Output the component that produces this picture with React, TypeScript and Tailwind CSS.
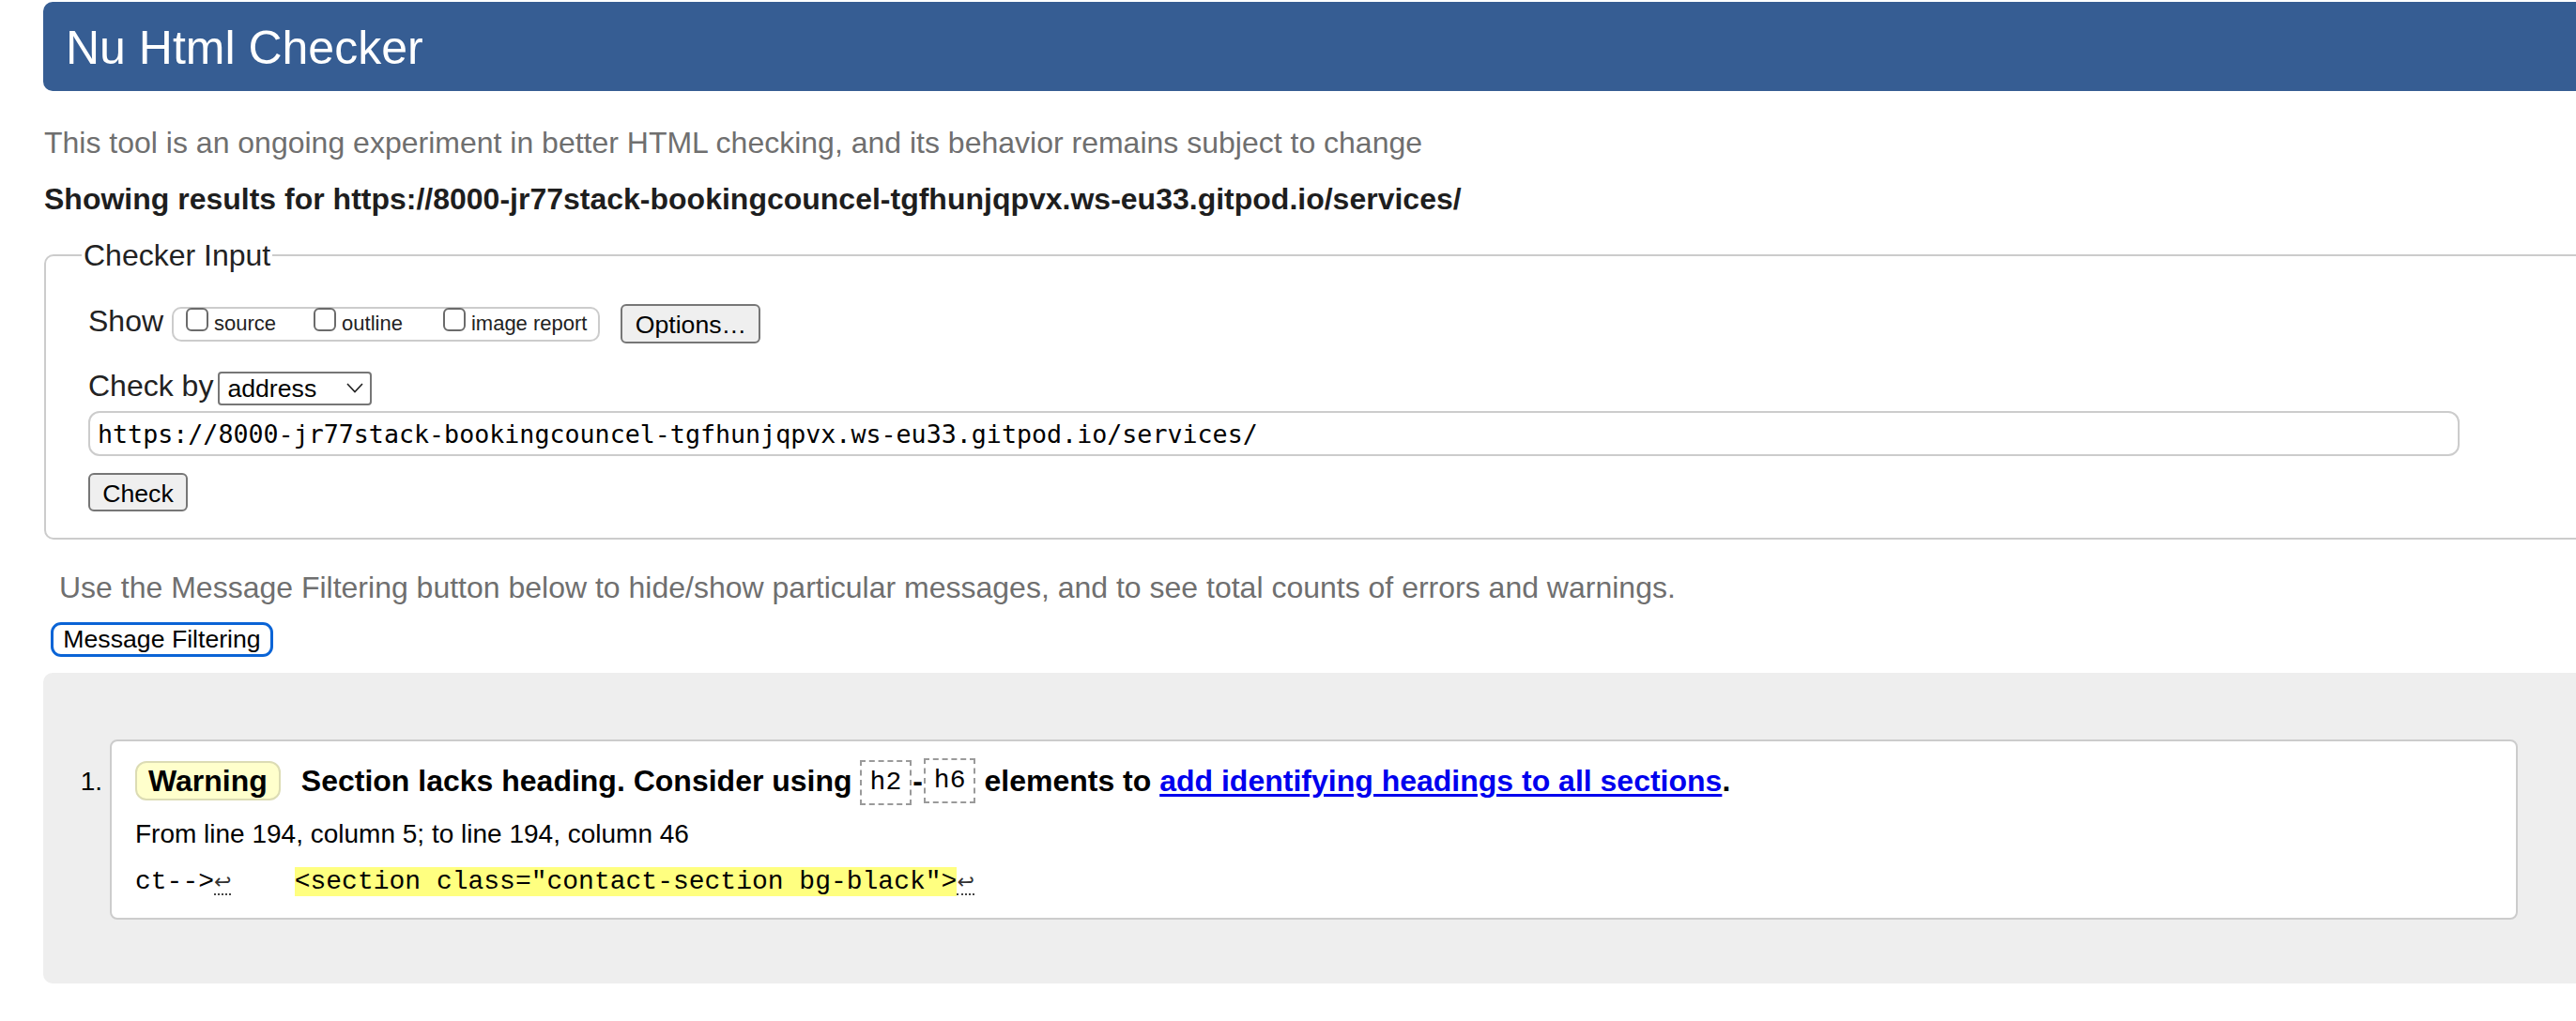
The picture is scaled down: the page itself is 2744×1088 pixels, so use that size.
import React from "react";

const SANS = "font-['Liberation_Sans',Arial,sans-serif]";
const CODE = "font-['Liberation_Mono','Courier_New',monospace]";

function ShowOptions() {
  const items = [
    { label: "source", gap: "mr-[40px]" },
    { label: "outline", gap: "mr-[43px]" },
    { label: "image report", gap: "" },
  ];

  return (
    <div className="flex h-[37px] items-start rounded-[10px] border-2 border-[#cccccc] pl-[13px] pr-[12px]">
      {items.map((item) => (
        <label key={item.label} className={`flex items-start ${item.gap}`}>
          <input
            type="checkbox"
            className="mt-[-1px] h-[25px] w-[24px] appearance-none rounded-[6px] border-2 border-[#6b6b6b] bg-white"
          />
          <span className="ml-[6px] mt-[4px] text-[22px] leading-[24px] text-[#222]">{item.label}</span>
        </label>
      ))}
    </div>
  );
}

function CheckerInput() {
  return (
    <fieldset className="mt-[20px] rounded-[10px] border-2 border-[#cccccc] pb-[28px]">
      <legend className="ml-[38px] px-[2px] text-[32px] leading-[40px] text-[#222]">Checker Input</legend>

      <div className="pl-[45px]">
        <div className="mt-[32px] flex h-[42px] items-center">
          <span className="pb-[6px] text-[32px] leading-[36px] text-[#222]">Show</span>
          <div className="ml-[9px]">
            <ShowOptions />
          </div>
          <button
            type="button"
            className="ml-[22px] h-[42px] w-[149px] rounded-[6px] border-2 border-[#767676] bg-[#efefef] text-[26.67px] text-black"
          >
            Options…
          </button>
        </div>

        <div className="mt-[30px] flex h-[36px] items-center">
          <span className="pb-[6px] text-[32px] leading-[36px] text-[#222]">Check by</span>
          <div className="relative ml-[5px]">
            <select
              defaultValue="address"
              className="h-[36px] w-[164px] appearance-none rounded-[4px] border-2 border-[#767676] bg-white pl-[8px] text-[26.67px] leading-[32px] text-black"
            >
              <option value="address">address</option>
              <option value="file">file upload</option>
              <option value="text">text input</option>
            </select>
            <svg
              className="pointer-events-none absolute right-[9px] top-[12px]"
              width="18"
              height="11"
              viewBox="0 0 18 11"
              fill="none"
            >
              <polyline points="1,1 9,9.5 17,1" stroke="#222" strokeWidth="1.6" />
            </svg>
          </div>
        </div>

        <input
          type="text"
          readOnly
          value="https://8000-jr77stack-bookingcouncel-tgfhunjqpvx.ws-eu33.gitpod.io/services/"
          className="mt-[6px] block h-[48px] w-[2526px] rounded-[12px] border-2 border-[#cccccc] bg-white pl-[8px] font-['DejaVu_Sans_Mono',monospace] text-[26.67px] text-black outline-none"
        />

        <button
          type="button"
          className="mt-[18px] h-[41px] w-[106px] rounded-[6px] border-2 border-[#767676] bg-[#efefef] text-[26.67px] text-black"
        >
          Check
        </button>
      </div>
    </fieldset>
  );
}

function Newline() {
  return (
    <span className="border-b-2 border-dotted border-[#444] font-['DejaVu_Sans',sans-serif] text-[22px] text-[#333]">
      ↩
    </span>
  );
}

function ElementName({ name }: { name: string }) {
  return (
    <span className={`inline-flex h-[48px] items-center border-2 border-dashed border-[#9a9a9a] px-[9px] text-[28px] font-normal ${CODE}`}>
      {name}
    </span>
  );
}

function WarningCard() {
  return (
    <div className="flex">
      <span className="mt-[27px] w-[71px] pr-[8px] text-right text-[28px] leading-[36px] text-black">1.</span>
      <div className="w-[2565px] rounded-[8px] border-2 border-[#cccccc] bg-white pb-[20px] pl-[25px] pt-[18px]">
        <div className="flex h-[48px] items-center text-[32px] font-bold text-black">
          <span className="flex h-[42px] items-center rounded-[12px] border-2 border-[#dcdcb4] bg-[#ffffcc] px-[12px] leading-none">
            Warning
          </span>
          <span className="ml-[22px]">Section lacks heading. Consider using</span>
          <span className="ml-[8px]">
            <ElementName name="h2" />
          </span>
          <span className="px-[1px]">-</span>
          <ElementName name="h6" />
          <span className="ml-[9px] whitespace-pre">
            elements to{" "}
            <a href="#" className="text-[#0000ee] underline underline-offset-[3px]">
              add identifying headings to all sections
            </a>
            .
          </span>
        </div>

        <p className="mt-[15px] text-[28px] leading-[36px] text-black">
          From line 194, column 5; to line 194, column 46
        </p>

        <div className={`mt-[15px] whitespace-pre text-[28px] leading-[36px] text-black ${CODE}`}>
          ct--&gt;
          <Newline />
          {"    "}
          <span className="bg-[#ffff80]">&lt;section class="contact-section bg-black"&gt;</span>
          <Newline />
        </div>
      </div>
    </div>
  );
}

export default function App() {
  return (
    <div className={`h-[1088px] w-[2744px] overflow-hidden bg-white ${SANS}`}>
      <div className="ml-[46px] w-[2760px]">
        <header className="mt-[2px] flex h-[95px] items-center rounded-[10px] bg-[#365d93] pl-[24px] pt-[3px]">
          <h1 className="text-[50px] leading-none text-white">Nu Html Checker</h1>
        </header>

        <p className="ml-[1px] mt-[35px] text-[32px] leading-[40px] text-[#6f6f6f]">
          This tool is an ongoing experiment in better HTML checking, and its behavior remains subject to change
        </p>
        <p className="ml-[1px] mt-[20px] text-[32px] font-bold leading-[40px] text-[#1e1e1e]">
          Showing results for https://8000-jr77stack-bookingcouncel-tgfhunjqpvx.ws-eu33.gitpod.io/services/
        </p>

        <div className="ml-[1px]">
          <CheckerInput />
        </div>

        <p className="ml-[17px] mt-[31px] text-[32px] leading-[40px] text-[#6f6f6f]">
          Use the Message Filtering button below to hide/show particular messages, and to see total counts of errors and
          warnings.
        </p>
        <button
          type="button"
          className="ml-[8px] mt-[17px] h-[37px] w-[237px] rounded-[11px] border-[3px] border-[#0a64d6] bg-white text-[26.67px] leading-none text-black"
        >
          Message Filtering
        </button>

        <section className="mt-[17px] rounded-[10px] bg-[#eeeeee] pb-[68px] pt-[71px]">
          <WarningCard />
        </section>
      </div>
    </div>
  );
}
